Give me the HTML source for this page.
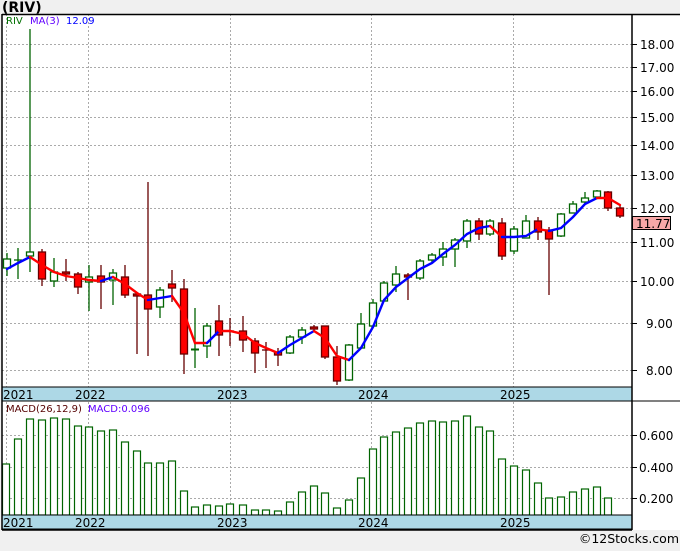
<!DOCTYPE html>
<html><head><meta charset="utf-8"><style>
html,body{margin:0;padding:0;background:#f0f0f0;}
body{width:680px;height:546px;overflow:hidden;font-family:"Liberation Sans","DejaVu Sans",sans-serif;}
</style></head><body>
<svg width="680" height="546" xmlns="http://www.w3.org/2000/svg" font-family="DejaVu Sans, Liberation Sans, sans-serif">
<rect x="0" y="0" width="680" height="546" fill="#f0f0f0"/>
<text x="2" y="12" font-size="14" font-weight="bold" fill="#000">(RIV)</text>
<rect x="2" y="14" width="630" height="516" fill="#fff"/>
<rect x="632" y="14" width="48" height="516" fill="#fff"/>
<!-- grid -->
<g stroke="#aaa" stroke-dasharray="2,2" stroke-width="1">
<line x1="2" y1="44.5" x2="632" y2="44.5"/><line x1="2" y1="67.5" x2="632" y2="67.5"/><line x1="2" y1="91.5" x2="632" y2="91.5"/><line x1="2" y1="117.5" x2="632" y2="117.5"/><line x1="2" y1="145.5" x2="632" y2="145.5"/><line x1="2" y1="175.5" x2="632" y2="175.5"/><line x1="2" y1="208.5" x2="632" y2="208.5"/><line x1="2" y1="242.5" x2="632" y2="242.5"/><line x1="2" y1="281.5" x2="632" y2="281.5"/><line x1="2" y1="323.5" x2="632" y2="323.5"/><line x1="2" y1="370.5" x2="632" y2="370.5"/>
<line x1="2" y1="435.5" x2="632" y2="435.5"/><line x1="2" y1="467.5" x2="632" y2="467.5"/><line x1="2" y1="498.5" x2="632" y2="498.5"/>
<line x1="6.5" y1="14" x2="6.5" y2="530"/><line x1="88.5" y1="14" x2="88.5" y2="530"/><line x1="230.5" y1="14" x2="230.5" y2="530"/><line x1="371.5" y1="14" x2="371.5" y2="530"/><line x1="513.5" y1="14" x2="513.5" y2="530"/>
</g>
<!-- candles -->
<g stroke-width="1.3">
<g stroke="#006400" fill="#fff">
<line x1="7" y1="253" x2="7" y2="276"/><rect x="3.5" y="259" width="7" height="9"/>
<line x1="18" y1="248" x2="18" y2="279"/><line x1="14" y1="260" x2="22" y2="260"/>
<line x1="30" y1="29" x2="30" y2="272"/><rect x="26.5" y="252" width="7" height="4"/>
<line x1="54" y1="258" x2="54" y2="287"/><rect x="50.5" y="272" width="7" height="9"/>
<line x1="89" y1="265" x2="89" y2="311"/><rect x="85.5" y="277" width="7" height="5"/>
<line x1="113" y1="269" x2="113" y2="305"/><rect x="109.5" y="273" width="7" height="7"/>
<line x1="160" y1="287" x2="160" y2="318"/><rect x="156.5" y="290" width="7" height="17"/>
<line x1="195" y1="308" x2="195" y2="368"/><line x1="191" y1="349.5" x2="199" y2="349.5" stroke-width="2"/>
<line x1="207" y1="323" x2="207" y2="358"/><rect x="203.5" y="326" width="7" height="20"/>
<line x1="290" y1="335" x2="290" y2="354"/><rect x="286.5" y="337" width="7" height="16"/>
<line x1="302" y1="327" x2="302" y2="344"/><rect x="298.5" y="330" width="7" height="7"/>
<line x1="349" y1="344" x2="349" y2="381"/><rect x="345.5" y="345" width="7" height="35"/>
<line x1="361" y1="313" x2="361" y2="348"/><rect x="357.5" y="324" width="7" height="24"/>
<line x1="373" y1="299" x2="373" y2="326"/><rect x="369.5" y="303" width="7" height="23"/>
<line x1="384" y1="281" x2="384" y2="301"/><rect x="380.5" y="283" width="7" height="18"/>
<line x1="396" y1="266" x2="396" y2="292"/><rect x="392.5" y="274" width="7" height="11"/>
<line x1="420" y1="259" x2="420" y2="280"/><rect x="416.5" y="261" width="7" height="17"/>
<line x1="432" y1="253" x2="432" y2="262"/><rect x="428.5" y="255" width="7" height="5"/>
<line x1="443" y1="242" x2="443" y2="266"/><rect x="439.5" y="249" width="7" height="8"/>
<line x1="455" y1="238" x2="455" y2="267"/><rect x="451.5" y="240" width="7" height="9"/>
<line x1="467" y1="219" x2="467" y2="248"/><rect x="463.5" y="221" width="7" height="20"/>
<line x1="490" y1="219" x2="490" y2="236"/><rect x="486.5" y="221" width="7" height="13"/>
<line x1="514" y1="226" x2="514" y2="254"/><rect x="510.5" y="229" width="7" height="22"/>
<line x1="526" y1="215" x2="526" y2="238"/><rect x="522.5" y="221" width="7" height="17"/>
<line x1="561" y1="213" x2="561" y2="237"/><rect x="557.5" y="214" width="7" height="22"/>
<line x1="573" y1="201" x2="573" y2="213"/><rect x="569.5" y="204" width="7" height="9"/>
<line x1="585" y1="192" x2="585" y2="203"/><rect x="581.5" y="198" width="7" height="4"/>
<line x1="597" y1="190" x2="597" y2="197"/><rect x="593.5" y="191" width="7" height="6"/>
</g>
<g stroke="#600" fill="#f00">
<line x1="42" y1="249" x2="42" y2="286"/><rect x="38.5" y="252" width="7" height="27"/>
<line x1="66" y1="259" x2="66" y2="281"/><rect x="62.5" y="272" width="7" height="2"/>
<line x1="78" y1="272" x2="78" y2="294"/><rect x="74.5" y="274" width="7" height="13"/>
<line x1="101" y1="265" x2="101" y2="309"/><rect x="97.5" y="276" width="7" height="6"/>
<line x1="125" y1="265" x2="125" y2="298"/><rect x="121.5" y="277" width="7" height="18"/>
<line x1="137" y1="292" x2="137" y2="354"/><rect x="133.5" y="294" width="7" height="2"/>
<line x1="148" y1="182" x2="148" y2="356"/><rect x="144.5" y="295" width="7" height="14"/>
<line x1="172" y1="270" x2="172" y2="302"/><rect x="168.5" y="284" width="7" height="4"/>
<line x1="184" y1="279" x2="184" y2="374"/><rect x="180.5" y="289" width="7" height="65"/>
<line x1="219" y1="305" x2="219" y2="356"/><rect x="215.5" y="321" width="7" height="14"/>
<line x1="230" y1="318" x2="230" y2="346"/><line x1="226" y1="331" x2="234" y2="331"/>
<line x1="243" y1="316" x2="243" y2="352"/><rect x="239.5" y="331" width="7" height="9"/>
<line x1="255" y1="338" x2="255" y2="373"/><rect x="251.5" y="341" width="7" height="12"/>
<line x1="266" y1="342" x2="266" y2="368"/><line x1="262" y1="350" x2="270" y2="350"/>
<line x1="278" y1="348" x2="278" y2="366"/><rect x="274.5" y="352" width="7" height="3"/>
<line x1="314" y1="325" x2="314" y2="331"/><rect x="310.5" y="327" width="7" height="2"/>
<line x1="325" y1="326" x2="325" y2="359"/><rect x="321.5" y="326" width="7" height="31"/>
<line x1="337" y1="346" x2="337" y2="385"/><rect x="333.5" y="357" width="7" height="24"/>
<line x1="408" y1="273" x2="408" y2="300"/><rect x="404.5" y="275" width="7" height="2"/>
<line x1="479" y1="218" x2="479" y2="240"/><rect x="475.5" y="221" width="7" height="13"/>
<line x1="502" y1="218" x2="502" y2="260"/><rect x="498.5" y="223" width="7" height="33"/>
<line x1="538" y1="217" x2="538" y2="240"/><rect x="534.5" y="221" width="7" height="11"/>
<line x1="549" y1="227" x2="549" y2="295"/><rect x="545.5" y="230" width="7" height="9"/>
<line x1="608" y1="191" x2="608" y2="211"/><rect x="604.5" y="192" width="7" height="16"/>
<line x1="620" y1="205" x2="620" y2="218"/><rect x="616.5" y="208" width="7" height="8"/>
</g>
</g>
<!-- MA -->
<g stroke-width="2.4" fill="none" stroke-linecap="round">
<polyline stroke="#00f" points="7,269 18,263 30,257"/>
<polyline stroke="#f00" points="30,257 42,265 54,272 66,276 78,278 89,280 101,281"/>
<polyline stroke="#00f" points="101,281 113,277"/>
<polyline stroke="#f00" points="113,277 125,284 137,293 148,300"/>
<polyline stroke="#00f" points="148,300 160,298 172,296"/>
<polyline stroke="#f00" points="172,296 184,313 195,343 207,343"/>
<polyline stroke="#00f" points="207,343 219,331"/>
<polyline stroke="#f00" points="219,331 230,331 243,334 255,343 266,348 278,353"/>
<polyline stroke="#00f" points="278,353 290,345 302,338 314,331"/>
<polyline stroke="#f00" points="314,331 325,338 337,356 349,360"/>
<polyline stroke="#00f" points="349,360 361,348 373,327 384,300 396,287 408,278 420,269 432,263 443,254 455,245 467,234 479,228 490,226"/>
<polyline stroke="#f00" points="490,226 502,237"/>
<polyline stroke="#00f" points="502,237 514,237 526,236 538,229"/>
<polyline stroke="#f00" points="538,229 549,231"/>
<polyline stroke="#00f" points="549,231 561,228 573,217 585,204 597,198"/>
<polyline stroke="#f00" points="597,198 608,198 620,205"/>
</g>
<!-- MACD bars -->
<g stroke="#006400" fill="#fff" stroke-width="1.2">
<rect x="2.5" y="464" width="7" height="51"/><rect x="14.5" y="439" width="7" height="76"/><rect x="26.5" y="419" width="7" height="96"/><rect x="38.5" y="420" width="7" height="95"/><rect x="50.5" y="418" width="7" height="97"/><rect x="62.5" y="419" width="7" height="96"/><rect x="74.5" y="426" width="7" height="89"/><rect x="85.5" y="427" width="7" height="88"/><rect x="97.5" y="431" width="7" height="84"/><rect x="109.5" y="430" width="7" height="85"/><rect x="121.5" y="442" width="7" height="73"/><rect x="133.5" y="451" width="7" height="64"/><rect x="144.5" y="463" width="7" height="52"/><rect x="156.5" y="463" width="7" height="52"/><rect x="168.5" y="461" width="7" height="54"/><rect x="180.5" y="491" width="7" height="24"/><rect x="191.5" y="507" width="7" height="8"/><rect x="203.5" y="505" width="7" height="10"/><rect x="215.5" y="506" width="7" height="9"/><rect x="226.5" y="504" width="7" height="11"/><rect x="239.5" y="505" width="7" height="10"/><rect x="251.5" y="510" width="7" height="5"/><rect x="262.5" y="510" width="7" height="5"/><rect x="274.5" y="511" width="7" height="4"/><rect x="286.5" y="502" width="7" height="13"/><rect x="298.5" y="492" width="7" height="23"/><rect x="310.5" y="486" width="7" height="29"/><rect x="321.5" y="493" width="7" height="22"/><rect x="333.5" y="508" width="7" height="7"/><rect x="345.5" y="500" width="7" height="15"/><rect x="357.5" y="478" width="7" height="37"/><rect x="369.5" y="449" width="7" height="66"/><rect x="380.5" y="437" width="7" height="78"/><rect x="392.5" y="432" width="7" height="83"/><rect x="404.5" y="428" width="7" height="87"/><rect x="416.5" y="423" width="7" height="92"/><rect x="428.5" y="421" width="7" height="94"/><rect x="439.5" y="422" width="7" height="93"/><rect x="451.5" y="421" width="7" height="94"/><rect x="463.5" y="416" width="7" height="99"/><rect x="475.5" y="427" width="7" height="88"/><rect x="486.5" y="431" width="7" height="84"/><rect x="498.5" y="459" width="7" height="56"/><rect x="510.5" y="466" width="7" height="49"/><rect x="522.5" y="470" width="7" height="45"/><rect x="534.5" y="483" width="7" height="32"/><rect x="545.5" y="498" width="7" height="17"/><rect x="557.5" y="497" width="7" height="18"/><rect x="569.5" y="492" width="7" height="23"/><rect x="581.5" y="489" width="7" height="26"/><rect x="593.5" y="487" width="7" height="28"/><rect x="604.5" y="498" width="7" height="17"/>
</g>
<!-- year bands -->
<g font-size="12" fill="#000">
<rect x="2" y="387" width="630" height="14" fill="#add8e6" stroke="#000"/>
<rect x="2" y="515" width="630" height="14" fill="#add8e6" stroke="#000"/>
<text x="3" y="399">2021</text><text x="75" y="399">2022</text><text x="217" y="399">2023</text><text x="358" y="399">2024</text><text x="500" y="399">2025</text>
<text x="3" y="527">2021</text><text x="75" y="527">2022</text><text x="217" y="527">2023</text><text x="358" y="527">2024</text><text x="500" y="527">2025</text>
</g>
<!-- frame -->
<line x1="2" y1="14.5" x2="680" y2="14.5" stroke="#000" stroke-width="1.5"/>
<line x1="2" y1="14" x2="2" y2="530" stroke="#000" stroke-width="1.5"/>
<line x1="2" y1="530" x2="632" y2="530" stroke="#000" stroke-width="1.5"/>
<line x1="632" y1="14" x2="632" y2="530" stroke="#000" stroke-width="1.5"/>
<line x1="632" y1="401" x2="680" y2="401" stroke="#000"/>
<line x1="2" y1="401" x2="632" y2="401" stroke="#000"/>
<rect x="632.8" y="530.8" width="48" height="16" fill="#f0f0f0"/>
<!-- ticks -->
<g stroke="#000">
<line x1="632" y1="44.5" x2="637" y2="44.5"/><line x1="632" y1="67.5" x2="637" y2="67.5"/><line x1="632" y1="91.5" x2="637" y2="91.5"/><line x1="632" y1="117.5" x2="637" y2="117.5"/><line x1="632" y1="145.5" x2="637" y2="145.5"/><line x1="632" y1="175.5" x2="637" y2="175.5"/><line x1="632" y1="208.5" x2="637" y2="208.5"/><line x1="632" y1="242.5" x2="637" y2="242.5"/><line x1="632" y1="281.5" x2="637" y2="281.5"/><line x1="632" y1="323.5" x2="637" y2="323.5"/><line x1="632" y1="370.5" x2="637" y2="370.5"/>
<line x1="632" y1="435.5" x2="637" y2="435.5"/><line x1="632" y1="467.5" x2="637" y2="467.5"/><line x1="632" y1="498.5" x2="637" y2="498.5"/>
</g>
<g font-size="12" fill="#000">
<text x="640" y="49">18.00</text><text x="640" y="72">17.00</text><text x="640" y="96">16.00</text><text x="640" y="122">15.00</text><text x="640" y="150">14.00</text><text x="640" y="180">13.00</text><text x="640" y="213">12.00</text><text x="640" y="247">11.00</text><text x="640" y="286">10.00</text><text x="646" y="328">9.00</text><text x="646" y="375">8.00</text>
<text x="639" y="440">0.600</text><text x="639" y="472">0.400</text><text x="639" y="503">0.200</text>
</g>
<rect x="632.5" y="216.5" width="38" height="13" fill="#f8a8a8" stroke="#000"/>
<text x="636" y="228" font-size="12" fill="#000">11.77</text>
<g font-size="10">
<text x="6" y="24" fill="#007000">RIV</text><text x="30" y="24" fill="#6000ff">MA(3)</text><text x="66" y="24" fill="#0000ff">12.09</text>
<text x="6" y="412" fill="#500">MACD(26,12,9)</text><text x="88" y="412" fill="#6000ff">MACD:0.096</text>
</g>
<text x="679" y="543" font-size="12.5" text-anchor="end" fill="#000">©12Stocks.com</text>
</svg>
</body></html>
